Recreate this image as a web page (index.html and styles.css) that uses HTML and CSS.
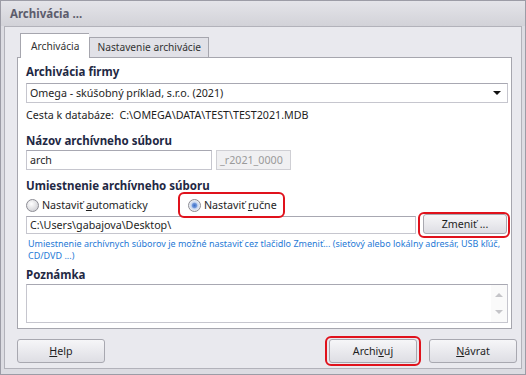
FILE: index.html
```html
<!DOCTYPE html>
<html lang="sk">
<head>
  <meta charset="UTF-8">
  <title>Archivácia ...</title>
  <link rel="stylesheet" href="styles.css">
</head>
<body>
  <div class="window">
    <div class="titlebar">Archivácia ...</div>

    <div class="client">
      <div class="tabs">
        <div class="tab active">Archivácia</div>
        <div class="tab">Nastavenie archivácie</div>
      </div>

      <div class="panel">
        <div class="label first">Archivácia firmy</div>
        <div class="select">
          <span>Omega - skúšobný príklad, s.r.o. (2021)</span>
          <span class="arrow"></span>
        </div>

        <div class="path-info">Cesta k databáze:&nbsp; C:\OMEGA\DATA\TEST\TEST2021.MDB</div>

        <div class="label">Názov archívneho súboru</div>
        <div class="name-row">
          <div class="input name">arch</div>
          <div class="input suffix">_r2021_0000</div>
        </div>

        <div class="label">Umiestnenie archívneho súboru</div>
        <div class="radio-row">
          <label class="radio auto"><span class="dot"></span><span>Nastaviť <u>a</u>utomaticky</span></label>
          <label class="radio checked marked"><span class="dot"></span><span>Nastaviť <u>r</u>učne</span></label>
        </div>

        <div class="folder-row">
          <div class="input folder">C:\Users\gabajova\Desktop\</div>
          <button class="btn change marked">Zmeniť ...</button>
        </div>

        <div class="hint"><span class="line">Umiestnenie archívnych súborov je možné nastaviť cez tlačidlo Zmeniť... (sieťový alebo lokálny adresár, USB kľúč,</span><br>CD/DVD ...)</div>

        <div class="label note-label">Poznámka</div>
        <div class="note">
          <div class="note-text"></div>
          <div class="scroll">
            <span class="up"></span>
            <span class="down"></span>
          </div>
        </div>
      </div>

      <div class="buttons">
        <button class="btn"><u>H</u>elp</button>
        <div class="right">
          <button class="btn marked">Archi<u>v</u>uj</button>
          <button class="btn"><u>N</u>ávrat</button>
        </div>
      </div>
    </div>
  </div>
</body>
</html>
```

FILE: styles.css
```css
body {
  margin: 0;
  font-family: "Noto Sans", sans-serif;
  font-size: 10.7px;
  color: #1e1e1e;
}
.window {
  width: 526px;
  height: 375px;
  box-sizing: border-box;
  border: 1px solid #9c9ca6;
  background: #dcdce2;
}
.titlebar {
  height: 25px;
  line-height: 25px;
  padding-left: 9px;
  font-weight: bold;
  font-size: 11.5px;
  color: #5c5c6c;
  background: linear-gradient(#e4e4e9, #d2d2d8);
}
.client {
  margin: 0 3px 4px 3px;
  height: 343px;
  box-sizing: border-box;
  border: 1px solid #b2b2ba;
  background: #e9e9ee;
  padding: 7px 4px 5px 12px;
}
.tabs {
  display: flex;
  align-items: flex-end;
  margin-left: 3px;
  height: 23px;
}
.tab {
  height: 19px;
  line-height: 19px;
  padding: 0 7px;
  font-size: 10.2px;
  border: 1px solid #a6a6ae;
  border-bottom: none;
  background: #e1e1e7;
  color: #333;
}
.tab.active {
  height: 24px;
  line-height: 24px;
  padding: 0 10px;
  margin-bottom: -1px;
  position: relative;
  background: #fff;
  border-right: none;
}
.panel {
  width: 495px;
  box-sizing: border-box;
  border: 1px solid #a6a6ae;
  background: #fff;
  padding: 6px 3px 5px 8px;
}
.label {
  height: 16px;
  line-height: 16px;
  margin-top: 8px;
  font-weight: bold;
  font-size: 11.5px;
  color: #1f2944;
}
.label.first {
  margin-top: 0;
}
.label.note-label {
  margin-top: 5px;
}
.input, .select {
  box-sizing: border-box;
  height: 20px;
  line-height: 18px;
  padding: 0 3px;
  border: 1px solid #c6c6ce;
  border-top-color: #a8a8b2;
  background: #fff;
}
.select {
  margin-top: 3px;
  display: flex;
  justify-content: space-between;
  align-items: center;
}
.arrow {
  width: 0;
  height: 0;
  margin-right: 3px;
  border-left: 4px solid transparent;
  border-right: 4px solid transparent;
  border-top: 4px solid #111;
}
.path-info {
  height: 20px;
  line-height: 20px;
  margin-top: 2px;
}
.name-row {
  display: flex;
  gap: 4px;
  margin-top: 1px;
}
.name {
  width: 186px;
}
.suffix {
  width: 75px;
  background: #f0f0f2;
  border-color: #cfcfd4;
  color: #9a9a9a;
}
.radio-row {
  display: flex;
  height: 16px;
  margin-top: 3px;
}
.radio {
  display: flex;
  align-items: center;
  gap: 3px;
}
.radio.auto {
  width: 162px;
}
.dot {
  width: 11px;
  height: 11px;
  border-radius: 50%;
  border: 1px solid #8c8c94;
  background: radial-gradient(circle at 40% 35%, #ffffff, #d4d4d8 75%);
}
.radio.checked .dot {
  background: radial-gradient(circle at 50% 50%, #3d6ec4 0, #6f97dc 28%, #c8d6ee 42%, #eef0f4 70%, #d0d0d6 100%);
}
.marked {
  position: relative;
}
.marked::after {
  content: "";
  position: absolute;
  inset: -4px -5px -4px -5px;
  border: 2.5px solid #e0121c;
  border-radius: 6px;
  pointer-events: none;
}
.radio.marked::after {
  inset: -5px -8px -5px -10px;
}
.folder-row {
  display: flex;
  align-items: flex-end;
  gap: 7px;
  margin-top: 1px;
}
.folder {
  width: 390px;
  height: 18px;
  line-height: 16px;
}
.btn {
  font-family: inherit;
  font-size: 10.7px;
  color: #1e1e1e;
  padding: 0;
  border: 1px solid #a8a8b0;
  border-radius: 3px;
  background: linear-gradient(#f6f6f8, #dedee4);
}
.change {
  width: 84px;
  height: 20px;
}
.change.marked::after {
  inset: -3px -4px -5px -6px;
}
.hint {
  margin-top: 4px;
  padding-left: 2px;
  font-size: 9px;
  line-height: 12px;
  color: #1f7ad6;
}
.hint .line {
  white-space: nowrap;
}
.note {
  display: flex;
  margin-top: 1px;
  height: 39px;
  box-sizing: border-box;
  border: 1px solid #c6c6ce;
  border-top-color: #a8a8b2;
}
.note-text {
  flex: 1;
}
.scroll {
  width: 16px;
  display: flex;
  flex-direction: column;
  justify-content: space-between;
  align-items: center;
  padding: 8px 0 8px;
  background: #fafafa;
}
.up, .down {
  width: 0;
  height: 0;
  border-left: 4px solid transparent;
  border-right: 4px solid transparent;
}
.up {
  border-bottom: 4px solid #c4c4c8;
}
.down {
  border-top: 4px solid #c4c4c8;
}
.buttons {
  display: flex;
  justify-content: space-between;
  margin-top: 10px;
}
.buttons .right {
  display: flex;
  gap: 12px;
}
.buttons .btn {
  width: 88px;
  height: 24px;
}
.buttons .marked::after {
  inset: -4px -5px -4px -5px;
}
```
